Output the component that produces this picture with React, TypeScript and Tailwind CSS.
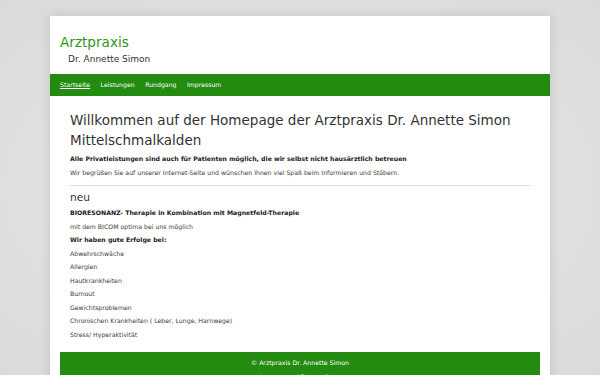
const NAV_ITEMS = ["Startseite", "Leistungen", "Rundgang", "Impressum"];

const ERFOLGE = [
  "Abwehrschwäche",
  "Allergien",
  "Hautkrankheiten",
  "Burnout",
  "Gewichtsproblemen",
  "Chronischen Krankheiten ( Leber, Lunge, Harnwege)",
  "Stress/ Hyperaktivität",
];

export default function App() {
  return (
    <div className="h-[375px] overflow-hidden bg-[radial-gradient(ellipse_at_center,#e8e8e8_0%,#dadada_100%)] pt-[16px] font-['DejaVu_Sans',sans-serif] antialiased">
      <div className="mx-auto w-[500px] bg-white shadow-[0_0_10px_rgba(0,0,0,0.12)] pb-[20px]">
        {/* Kopf */}
        <header className="h-[58px] px-[10px] pt-[17px]">
          <h1 className="text-[13.6px] leading-[18px] text-[#2f961b]">Arztpraxis</h1>
          <p className="mt-[2px] pl-[8px] text-[9px] leading-[12px] text-[#333]">Dr. Annette Simon</p>
        </header>

        {/* Navigation */}
        <nav className="flex h-[22px] items-center gap-[10.5px] bg-[#228b10] pl-[10px] text-[6.2px] text-white">
          {NAV_ITEMS.map((item, i) => (
            <a key={item} href="#" className={i === 0 ? "underline" : ""}>
              {item}
            </a>
          ))}
        </nav>

        {/* Inhalt */}
        <main className="px-[20px] pt-[15px] text-[#333]">
          <h2 className="text-[13.5px] leading-[19.5px] text-[#333]">
            Willkommen auf der Homepage der Arztpraxis Dr. Annette Simon Mittelschmalkalden
          </h2>
          <p className="mt-[4px] text-[6.2px] font-bold leading-[10px] text-[#222]">
            Alle Privatleistungen sind auch für Patienten möglich, die wir selbst nicht hausärztlich betreuen
          </p>
          <p className="mt-[4px] text-[6.2px] leading-[10px] text-[#3a3a3a]">
            Wir begrüßen Sie auf unserer Internet-Seite und wünschen Ihnen viel Spaß beim Informieren und Stöbern.
          </p>
          <hr className="mt-[6.5px] border-t border-[#ddd]" />
          <h3 className="mt-[4.5px] text-[10.6px] leading-[14px]">neu</h3>
          <div className="mt-[2px] text-[6.2px] leading-[13.55px] text-[#3a3a3a]">
            <p className="font-bold text-[#222]">BIORESONANZ- Therapie in Kombination mit Magnetfeld-Therapie</p>
            <p>mit dem BICOM optima bei uns möglich</p>
            <p className="font-bold text-[#222]">Wir haben gute Erfolge bei:</p>
            {ERFOLGE.map((e) => (
              <p key={e}>{e}</p>
            ))}
          </div>
        </main>

        {/* Fuß */}
        <footer className="mx-[10px] mt-[11px] bg-[#228b10] pt-[6px] pb-[8px] text-center text-[6.2px] leading-[10px] text-white">
          <p>© Arztpraxis Dr. Annette Simon</p>
          <p className="mt-[4px]">Impressum | Datenschutz</p>
        </footer>
      </div>
    </div>
  );
}
